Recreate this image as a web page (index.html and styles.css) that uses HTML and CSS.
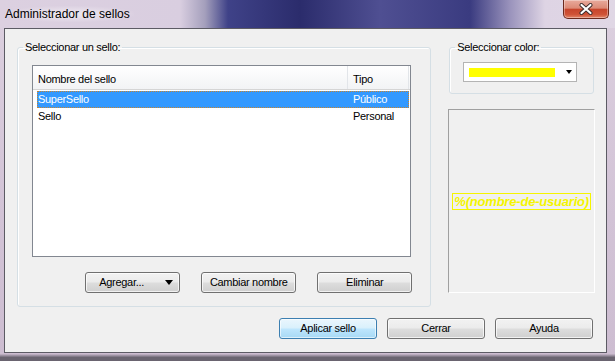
FILE: index.html
```html
<!DOCTYPE html>
<html lang="es">
<head>
    <meta charset="UTF-8">
    <title>Administrador de sellos</title>
    <link rel="stylesheet" href="styles.css">
</head>
<body>

    <div class="window">
        <!-- Title bar -->
        <div class="titlebar">
            <span class="title">Administrador de sellos</span>
            <button class="close-btn" type="button" aria-label="Cerrar">
                <svg width="14" height="12" viewBox="0 0 14 12">
                    <path d="M2.5 2 L11.5 10 M11.5 2 L2.5 10" stroke="#3a2a2a" stroke-width="4" stroke-linecap="round" fill="none"/>
                    <path d="M2.5 2 L11.5 10 M11.5 2 L2.5 10" stroke="#ffffff" stroke-width="2.2" stroke-linecap="round" fill="none"/>
                </svg>
            </button>
        </div>

        <div class="client">
            <div class="main-row">
                <!-- Stamp list -->
                <fieldset class="group stamp-group">
                    <legend>Seleccionar un sello:</legend>

                    <div class="listview">
                        <div class="lv-header">
                            <div class="lv-head-name">Nombre del sello</div>
                            <div class="lv-head-type">Tipo</div>
                        </div>
                        <div class="lv-row selected">
                            <div class="lv-name">SuperSello</div>
                            <div class="lv-type">Público</div>
                        </div>
                        <div class="lv-row">
                            <div class="lv-name">Sello</div>
                            <div class="lv-type">Personal</div>
                        </div>
                    </div>

                    <div class="group-buttons">
                        <button type="button" class="btn btn-split">Agregar... <span class="caret"></span></button>
                        <button type="button" class="btn">Cambiar nombre</button>
                        <button type="button" class="btn">Eliminar</button>
                    </div>
                </fieldset>

                <!-- Colour picker and preview -->
                <div class="side">
                    <fieldset class="group color-group">
                        <legend>Seleccionar color:</legend>
                        <div class="combo">
                            <span class="swatch"></span>
                            <span class="caret caret-small"></span>
                        </div>
                    </fieldset>

                    <div class="preview">
                        <span class="preview-text">%(nombre-de-usuario)</span>
                    </div>
                </div>
            </div>

            <div class="dialog-buttons">
                <button type="button" class="btn btn-wide btn-default">Aplicar sello</button>
                <button type="button" class="btn btn-wide">Cerrar</button>
                <button type="button" class="btn btn-wide">Ayuda</button>
            </div>
        </div>
    </div>

</body>
</html>
```

FILE: styles.css
```css
/* Global styles */
* {
    box-sizing: border-box;
}

html, body {
    margin: 0;
    padding: 0;
}

body {
    width: 615px;
    height: 361px;
    overflow: hidden;
    font-family: "Liberation Sans", Arial, sans-serif;
    font-size: 11px;
    letter-spacing: -0.3px;
    color: #000;
}

/* Window frame */
.window {
    height: 361px;
    display: flex;
    flex-direction: column;
    background: linear-gradient(to bottom, #dcd0df, #d2c3d6 60%, #cdbdd1 98%, #6a6470 99%);
}

.titlebar {
    height: 28px;
    display: flex;
    align-items: flex-start;
    padding-left: 5px;
    background: linear-gradient(to right, #dcd0e0 0, #d9cee0 180px, #a49fbc 205px, #3f4288 228px, #2b2c6c 300px, #4f4f92 380px, #3a3b80 470px, #9a93bc 510px, #ded4e4 545px, #e0d7e5 615px);
}

.title {
    margin-top: 6px;
    line-height: 16px;
    font-size: 12px;
    letter-spacing: 0;
    padding: 0 4px 0 0;
    background: radial-gradient(ellipse at center, rgba(255, 255, 255, 0.55), rgba(255, 255, 255, 0) 75%);
}

.close-btn {
    margin-left: auto;
    margin-right: 6px;
    width: 46px;
    height: 19px;
    padding: 0;
    border: 1px solid #6b2a1e;
    border-top: none;
    border-radius: 0 0 5px 5px;
    background: linear-gradient(to bottom, #e8aa9c 0%, #dc8a76 45%, #c7452c 52%, #cf5337 80%, #e38669 100%);
    box-shadow: inset 0 0 0 1px rgba(255, 255, 255, 0.35);
    display: flex;
    align-items: center;
    justify-content: center;
}

/* Client area */
.client {
    flex: 1;
    margin: 0 8px 8px 4px;
    border: 1px solid #5c5b64;
    background-color: #f0f0f0;
    display: flex;
    flex-direction: column;
}

.main-row {
    display: flex;
    padding: 10px 11px 0 12px;
}

/* Group boxes */
.group {
    margin: 0;
    padding: 0;
    min-width: 0;
    border: 1px solid #d5dfe5;
    border-radius: 3px;
    box-shadow: inset 1px 1px 0 #fff;
}

.group legend {
    padding: 0 2px;
    margin-left: 5px;
    line-height: 16px;
}

.stamp-group {
    width: 415px;
    height: 268px;
    padding: 10px 19px 0 0;
}

/* List view */
.listview {
    height: 192px;
    margin-left: 14px;
    border: 1px solid #828790;
    background-color: #fff;
}

.lv-header {
    display: flex;
    height: 24px;
    border-bottom: 1px solid #d5d5d5;
    background: linear-gradient(to bottom, #ffffff, #f2f3f5);
}

.lv-head-name,
.lv-head-type {
    padding: 4px 0 0 5px;
    line-height: 19px;
    border-right: 1px solid #e2e5e9;
}

.lv-head-name {
    width: 315px;
}

.lv-head-type {
    width: 61px;
}

.lv-row {
    display: flex;
    height: 17px;
    line-height: 17px;
    margin: 0 1px 0 4px;
}

.lv-header + .lv-row {
    margin-top: 1px;
}

.lv-name {
    width: 310px;
    padding-left: 1px;
}

.lv-type {
    padding-left: 6px;
}

.lv-row.selected {
    background-color: #3399ff;
    color: #fff;
    outline: 1px dotted #c8842e;
    outline-offset: -1px;
}

/* Buttons */
.group-buttons {
    display: flex;
    justify-content: flex-end;
    gap: 21px;
    margin: 15px -1px 0 14px;
}

.btn {
    width: 95px;
    height: 21px;
    padding: 0;
    border: 1px solid #707070;
    border-radius: 3px;
    background: linear-gradient(to bottom, #f2f2f2 0%, #ebebeb 48%, #dddddd 52%, #cfcfcf 100%);
    box-shadow: inset 0 0 0 1px rgba(255, 255, 255, 0.7);
    font-family: inherit;
    font-size: 11px;
    letter-spacing: -0.3px;
    color: #000;
    line-height: 17px;
}

.btn-split {
    display: flex;
    align-items: center;
    justify-content: space-between;
    padding: 0 6px 0 13px;
}

.caret {
    width: 0;
    height: 0;
    border-left: 4px solid transparent;
    border-right: 4px solid transparent;
    border-top: 5px solid #000;
}

.caret-small {
    width: 1px;
    border-left-width: 3px;
    border-right-width: 3px;
    border-top-width: 4px;
}

.dialog-buttons {
    display: flex;
    justify-content: flex-end;
    gap: 10px;
    padding: 11px 13px 0 0;
}

.btn-wide {
    width: 98px;
}

.btn-default {
    border-color: #3c7fb1;
    background: linear-gradient(to bottom, #eaf6fd 0%, #d9f0fc 48%, #bee6fd 52%, #a7d9f5 100%);
    box-shadow: inset 0 0 0 1px rgba(255, 255, 255, 0.6);
}

/* Colour side */
.side {
    width: 147px;
    margin-left: 17px;
    display: flex;
    flex-direction: column;
}

.color-group {
    margin: 0 1px;
    height: 55px;
    padding: 7px 0 0 0;
}

.combo {
    width: 114px;
    height: 20px;
    margin-left: 13px;
    border: 1px solid #b4b4b4;
    background-color: #fff;
    display: flex;
    align-items: center;
    justify-content: space-between;
    padding: 0 4px 0 5px;
}

.swatch {
    width: 86px;
    height: 9px;
    margin-top: 1px;
    background-color: #ffff00;
}

.preview {
    margin-top: 15px;
    height: 184px;
    border: 1px solid;
    border-color: #a0a0a0 #ffffff #ffffff #a0a0a0;
    display: flex;
    align-items: center;
    justify-content: center;
}

.preview-text {
    border: 1px solid #f5f500;
    color: #f5f500;
    font-weight: bold;
    font-style: italic;
    font-size: 13px;
    letter-spacing: -0.2px;
    line-height: 15px;
    padding: 0 1px;
}
```
